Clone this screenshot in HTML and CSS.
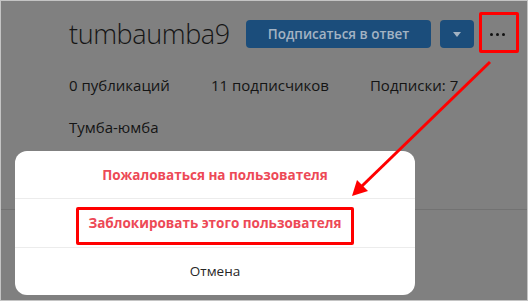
FILE: index.html
```html
<!DOCTYPE html>
<html lang="ru">
<head>
<meta charset="utf-8">
<link rel="stylesheet" href="styles.css">
</head>
<body>
<div class="frame">
  <div class="profile">
    <div class="head">
      <h1 class="username">tumbaumba9</h1>
      <button class="btn-follow">Подписаться в ответ</button>
      <button class="btn-drop"><span class="tri"></span></button>
      <button class="btn-more"><span class="dot"></span><span class="dot"></span><span class="dot"></span></button>
    </div>
    <ul class="stats">
      <li>0 публикаций</li>
      <li>11 подписчиков</li>
      <li>Подписки: 7</li>
    </ul>
    <div class="fullname">Тумба-юмба</div>
  </div>
  <div class="tabs-line"></div>

  <div class="modal">
    <div class="opt danger">Пожаловаться на пользователя</div>
    <div class="opt danger">Заблокировать этого пользователя</div>
    <div class="opt">Отмена</div>
  </div>

  <div class="mark mark-more"></div>
  <div class="mark mark-block"></div>
  <svg class="arrow" width="528" height="301" viewBox="0 0 528 301">
    <line x1="490" y1="62" x2="362" y2="186" stroke="#ff0000" stroke-width="3"/>
    <polygon points="352,196 357,180 368,191" fill="#ff0000"/>
  </svg>
</div>
</body>
</html>
```
FILE: styles.css
```css
* { box-sizing: border-box; }
body { margin: 0; }
.frame {
  position: relative;
  width: 528px;
  height: 301px;
  background: #808080;
  border: 1px solid #c4c4c4;
  overflow: hidden;
  font-family: "Open Sans", "Noto Sans", sans-serif;
  color: #141414;
}
.profile { padding: 19px 0 0 68px; }
.head { display: flex; align-items: center; height: 28px; }
.username {
  margin: 0 20px 0 0;
  font-size: 27px;
  font-weight: 300;
  line-height: 28px;
  letter-spacing: -0.4px;
  color: #151515;
  width: 157px;
  white-space: nowrap;
}
.head button { border: 0; padding: 0; height: 28px; border-radius: 4px; font-family: inherit; }
.btn-follow {
  width: 185px;
  background: #1b4d7b;
  color: #a3b3c3;
  font-size: 13.5px;
  font-weight: 600;
}
.btn-drop {
  width: 34px;
  margin-left: 9px;
  background: #1b4d7b;
  display: flex; align-items: center; justify-content: center;
}
.tri {
  width: 0; height: 0;
  border-left: 4px solid transparent;
  border-right: 4px solid transparent;
  border-top: 5px solid #a3b3c3;
}
.btn-more {
  width: 30px;
  margin-left: 8px;
  background: transparent;
  display: flex; align-items: center; justify-content: center; gap: 3px;
}
.dot { width: 3px; height: 3px; border-radius: 50%; background: #111; }
.stats {
  list-style: none;
  margin: 27px 0 0;
  padding: 0;
  display: flex;
  gap: 41px;
  font-size: 15px;
  line-height: 20px;
}
.fullname { margin-top: 22px; font-size: 15px; line-height: 20px; }
.tabs-line { margin-top: 72px; height: 1px; background: #727272; }

.modal {
  position: absolute;
  left: 14px;
  top: 150px;
  width: 400px;
  height: 144px;
  background: #fff;
  border-radius: 12px;
  display: flex;
  flex-direction: column;
}
.opt {
  flex: 1;
  display: flex; align-items: center; justify-content: center;
  font-size: 13.5px;
  color: #262626;
  border-top: 1px solid #ececec;
}
.opt:first-child { border-top: 0; }
.opt.danger { color: #ed4956; font-weight: 700; font-size: 13.5px; }

.mark { position: absolute; border: 3px solid #ff0000; border-radius: 2px; }
.mark-more { left: 478px; top: 11px; width: 40px; height: 41px; }
.mark-block { left: 75px; top: 206px; width: 278px; height: 38px; }
.arrow { position: absolute; left: -1px; top: -1px; }
```
